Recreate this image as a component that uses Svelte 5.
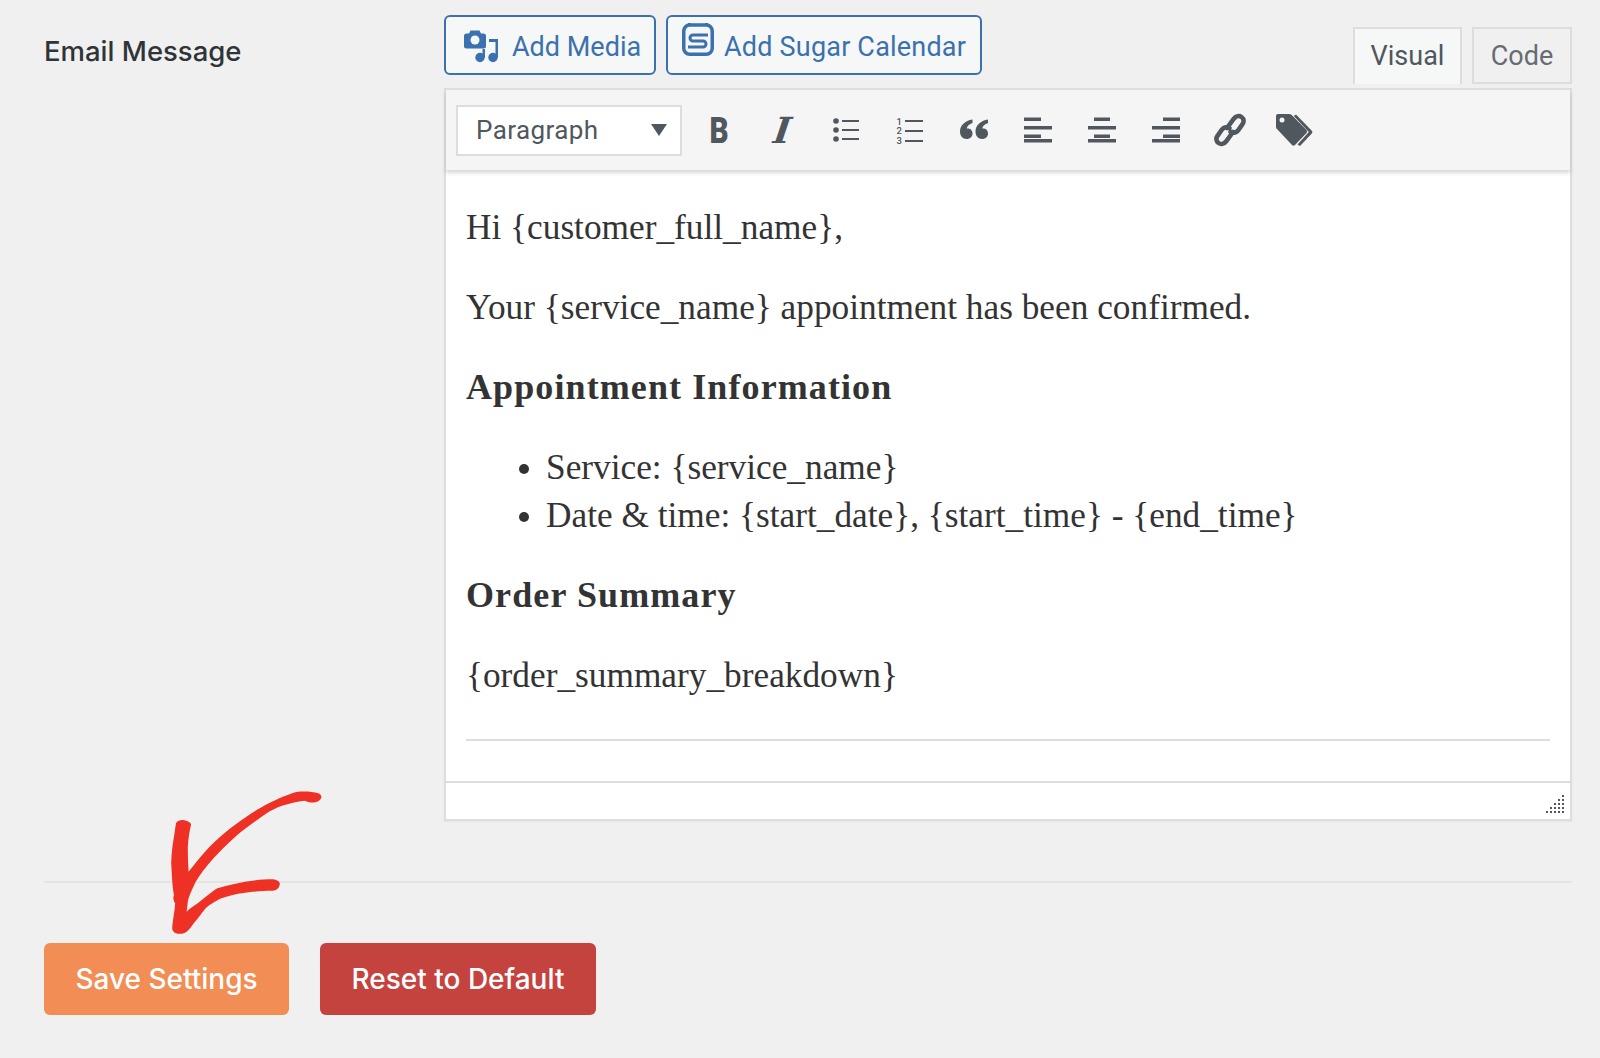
<script>
    // resize grip dots, one row per step of the triangle
    const grip = [];
    for (let row = 0; row < 5; row++) {
        for (let col = 4 - row; col < 5; col++) {
            grip.push({ x: col * 4, y: row * 4 });
        }
    }
</script>

<div class="page">
    <div class="field">
        <div class="label">Email Message</div>
        <div class="editor-wrap">
            <div class="media-row">
                <button class="media-btn first">
                    <svg class="ic-media" viewBox="0 0 34 33" aria-hidden="true">
                        <path d="M2.500 3.500H5L6.500.500h9l1.500 3h2.500a2.500 2.500 0 0 1 2.500 2.500v10a2.500 2.500 0 0 1-2.500 2.500h-17A2.500 2.500 0 0 1 0 16V6a2.500 2.500 0 0 1 2.500-2.500z" fill="#3a71ae" />
                        <circle cx="11" cy="10" r="4.500" fill="#f6f7f7" />
                        <circle cx="16" cy="27.500" r="4.700" fill="#3a71ae" />
                        <path d="M18.500 19h2.500v8.500h-2.500z" fill="#3a71ae" />
                        <circle cx="29" cy="27.500" r="4.700" fill="#3a71ae" />
                        <path d="M25 9h9v18.500h-2.500V12H25z" fill="#3a71ae" />
                    </svg>
                    <span>Add Media</span>
                </button>
                <button class="media-btn second">
                    <svg class="ic-cal" viewBox="0 0 32 33" aria-hidden="true">
                        <rect x="1.750" y="2" width="28.500" height="29.250" rx="6" fill="none" stroke="#3a71ae" stroke-width="3.500" />
                        <path d="M6 0h3v3H6zM23 0h3v3h-3z" fill="#3a71ae" />
                        <path d="M26 12H11a3 3 0 0 0 0 6h10a3 3 0 0 1 0 6H6" fill="none" stroke="#3a71ae" stroke-width="3" />
                    </svg>
                    <span>Add Sugar Calendar</span>
                </button>
                <div class="tabs">
                    <div class="tab active">Visual</div>
                    <div class="tab">Code</div>
                </div>
            </div>

            <div class="editor">
                <div class="toolbar">
                    <div class="format-select">
                        <span>Paragraph</span>
                        <i class="caret"></i>
                    </div>
                    <div class="tool"><span class="bold-glyph">B</span></div>
                    <div class="tool"><span class="italic-glyph">I</span></div>
                    <div class="tool">
                        <svg viewBox="0 0 30 30" class="ic" aria-hidden="true">
                            <circle cx="5" cy="6" r="2.800" /><circle cx="5" cy="15" r="2.800" /><circle cx="5" cy="24" r="2.800" />
                            <path d="M11 5h17v2H11zM11 14h17v2H11zM11 23h17v2H11z" />
                        </svg>
                    </div>
                    <div class="tool">
                        <svg viewBox="0 0 30 30" class="ic" aria-hidden="true">
                            <text x="1.500" y="9.500" class="num">1</text>
                            <text x="1.500" y="19" class="num">2</text>
                            <text x="1.500" y="28.500" class="num">3</text>
                            <path d="M10 5h18v2H10zM10 15h18v2H10zM10 25h18v2H10z" />
                        </svg>
                    </div>
                    <div class="tool">
                        <svg viewBox="0 0 30 30" class="ic" aria-hidden="true">
                            <path d="M13.500 4.500v3.500C9.500 9.500 8 11.500 7.800 13.500c3.500-.5 5.700 1.800 5.700 5 0 3.300-2.600 5.500-5.800 5.500C3.500 24 1 20.800 1 16.500 1 10.500 6 5.500 13.500 4.500zM29 4.500v3.500c-4 1.500-5.500 3.500-5.700 5.500 3.500-.5 5.700 1.800 5.700 5 0 3.300-2.600 5.500-5.800 5.500-4.200 0-6.700-3.200-6.700-7.500 0-6 5-11 12.500-12z" />
                        </svg>
                    </div>
                    <div class="tool">
                        <svg viewBox="0 0 30 30" class="ic" aria-hidden="true">
                            <path d="M1 2.500h17V6H1zM1 11h28v3.500H1zM1 19.500h17V23H1zM1 27.500h28V24H1z" />
                        </svg>
                    </div>
                    <div class="tool">
                        <svg viewBox="0 0 30 30" class="ic" aria-hidden="true">
                            <path d="M7 2.500h16V6H7zM1 11h28v3.500H1zM7 19.500h16V23H7zM1 27.500h28V24H1z" />
                        </svg>
                    </div>
                    <div class="tool">
                        <svg viewBox="0 0 30 30" class="ic" aria-hidden="true">
                            <path d="M12 2.500h17V6H12zM1 11h28v3.500H1zM12 19.500h17V23H12zM1 27.500h28V24H1z" />
                        </svg>
                    </div>
                    <div class="tool">
                        <svg viewBox="0 0 34 36" class="ic big" aria-hidden="true">
                            <g fill="none" stroke="#50575e" stroke-width="4.600" stroke-linecap="round">
                                <path d="M14 16l7-9.500c2-2.500 5-3.300 7.500-1.500s2.800 5 .8 7.500L25 18.500c-2 2.500-5 3-7.500 1.300" />
                                <path d="M20 20l-7 9.500c-2 2.500-5 3.300-7.500 1.500s-2.800-5-.8-7.500L9 17.500c2-2.500 5-3 7.500-1.300" />
                            </g>
                        </svg>
                    </div>
                    <div class="tool">
                        <svg viewBox="0 0 38 34" class="ic tag" aria-hidden="true">
                            <path d="M3 1h11.500l2 .8L31.500 17a2.200 2.200 0 0 1 0 3L20 32a2.200 2.200 0 0 1-3 0L1.500 15.500 1 14V3a2 2 0 0 1 2-2z" />
                            <path d="M21 1.500l15.800 16.300c.8.900.8 2 0 2.800L25 33l-2.500-1.500 11.300-12.500-15-16z" />
                            <circle cx="7" cy="7" r="2.500" fill="#f5f5f5" />
                        </svg>
                    </div>
                </div>

                <div class="content">
                    <p>Hi &#123;customer_full_name&#125;,</p>
                    <p>Your &#123;service_name&#125; appointment has been confirmed.</p>
                    <h3>Appointment Information</h3>
                    <ul>
                        <li>Service: &#123;service_name&#125;</li>
                        <li>Date &amp; time: &#123;start_date&#125;, &#123;start_time&#125; - &#123;end_time&#125;</li>
                    </ul>
                    <h3>Order Summary</h3>
                    <p>&#123;order_summary_breakdown&#125;</p>
                    <hr />
                </div>

                <div class="statusbar">
                    <svg class="grip" viewBox="0 0 18 18" aria-hidden="true">
                        {#each grip as d}
                            <rect x={d.x} y={d.y} width="2" height="2" />
                        {/each}
                    </svg>
                </div>
            </div>
        </div>
    </div>

    <div class="actions">
        <button class="action save">Save Settings</button>
        <button class="action reset">Reset to Default</button>
    </div>

    <!-- hand drawn annotation over the page -->
    <svg class="arrow" viewBox="0 0 1568 864" preserveAspectRatio="none" aria-hidden="true">
        <path d="M812 85C808 98 790 102 770 92C745 95 710 105 680 125C650 150 625 170 600 195C575 222 555 245 540 265C520 292 505 315 495 335C485 360 477 380 475 395L472 425C480 415 490 408 500 400C520 382 535 365 550 355C575 345 600 340 620 335C645 330 670 328 690 328C705 330 710 340 707 345C705 358 695 362 690 362C665 362 640 365 620 368C595 372 575 378 560 385C540 396 530 405 520 415C510 430 500 447 490 460C480 478 472 488 465 490C452 494 440 490 438 483C434 475 436 470 436 465C438 445 442 420 443 400C437 390 438 380 440 375C436 350 435 320 433 280C434 245 437 220 440 200L445 160C448 152 455 150 462 150C475 152 484 158 483 165C478 190 476 210 475 230C475 260 476 285 477 305C495 278 510 255 530 230C553 205 575 180 600 160C625 137 655 115 680 100C705 85 730 72 750 66C770 63 790 65 805 70C812 73 814 80 812 85Z" fill="#ee3124" />
    </svg>
</div>

<style>
    :global(body) {
        background: #f0f0f0;
    }

    .page {
        position: relative;
        height: 1058px;
        box-sizing: border-box;
        padding: 15px 28px 0 44px;
        font-family: Roboto, "Liberation Sans", sans-serif;
        color: #333;
        overflow: hidden;
    }

    .field {
        display: grid;
        grid-template-columns: 400px 1fr;
    }

    .label {
        font-family: Inter, sans-serif;
        font-weight: 500;
        font-size: 27.500px;
        padding-top: 19px;
        color: #2f3438;
    }

    .media-row {
        display: flex;
        height: 73px;
        gap: 10px;
    }

    .media-btn {
        display: flex;
        align-items: center;
        height: 60px;
        box-sizing: border-box;
        background: #f6f7f7;
        border: 2px solid #3a71ae;
        border-radius: 6px;
        color: #3a71ae;
        font-family: Roboto, sans-serif;
        font-size: 27px;
        letter-spacing: 0.2px;
        padding: 0;
    }

    .media-btn span {
        padding-top: 3px;
    }

    .first {
        width: 212px;
        padding-left: 18px;
        gap: 14px;
        letter-spacing: 0;
    }

    .second {
        width: 316px;
        padding-left: 14px;
        gap: 10px;
    }

    .ic-media {
        width: 34px;
        height: 33px;
        margin-top: 3px;
    }

    .ic-cal {
        width: 32px;
        height: 33px;
        margin-top: -11px;
    }

    .tabs {
        margin-left: auto;
        display: flex;
        gap: 10px;
        padding-top: 12px;
        height: 57px;
    }

    .tab {
        width: 100px;
        box-sizing: border-box;
        height: 57px;
        border: 2px solid #ddd;
        display: flex;
        align-items: center;
        justify-content: center;
        font-size: 27px;
        color: #666c72;
        background: #f0f0f0;
    }

    .tab.active {
        width: 109px;
        background: #f6f7f7;
        color: #50575e;
        border-bottom: none;
        padding-bottom: 1px;
    }

    .editor {
        border: 2px solid #ddd;
        box-shadow: 0 1px 2px rgba(0, 0, 0, 0.05);
        background: #fff;
    }

    .toolbar {
        display: flex;
        align-items: center;
        height: 80px;
        box-sizing: border-box;
        padding-left: 10px;
        background: #f5f5f5;
        box-shadow: 0 3px 4px rgba(0, 0, 0, 0.16);
        position: relative;
    }

    .format-select {
        width: 226px;
        height: 51px;
        box-sizing: border-box;
        border: 2px solid #ddd;
        background: #fff;
        display: flex;
        align-items: center;
        justify-content: space-between;
        padding: 0 13px 0 18px;
        font-size: 26px;
        letter-spacing: 0.4px;
        color: #50575e;
        margin-right: 4px;
    }

    .caret {
        width: 0;
        height: 0;
        border-left: 8px solid transparent;
        border-right: 8px solid transparent;
        border-top: 12px solid #50575e;
    }

    .tool {
        width: 64px;
        height: 50px;
        display: flex;
        align-items: center;
        justify-content: center;
        color: #50575e;
    }

    .bold-glyph {
        font-family: Roboto, sans-serif;
        font-weight: 900;
        font-size: 37px;
        line-height: 1;
        transform: translateX(1px) scaleX(0.8);
    }

    .italic-glyph {
        font-family: "DejaVu Serif", serif;
        font-style: italic;
        font-weight: 700;
        font-size: 36px;
        line-height: 1;
        transform: skewX(-8deg);
    }

    .ic {
        width: 30px;
        height: 30px;
        fill: #50575e;
    }

    .ic.big {
        width: 34px;
        height: 36px;
    }

    .ic.tag {
        width: 38px;
        height: 34px;
    }

    .num {
        font-family: Roboto, sans-serif;
        font-size: 9.500px;
        font-weight: 500;
    }

    .content {
        padding: 34px 20px 0 20px;
        height: 611px;
        box-sizing: border-box;
        font-family: "Liberation Serif", serif;
        font-size: 35.300px;
        line-height: 48px;
        color: #333;
    }

    .content p,
    .content h3 {
        margin: 0 0 32px;
        font-size: 35.300px;
        line-height: 48px;
    }

    .content h3 {
        font-weight: 700;
        font-size: 36px;
        letter-spacing: 1.100px;
        margin: -1px 0 33px;
    }

    .content ul {
        margin: 0 0 32px;
        padding-left: 80px;
    }

    .content hr {
        border: none;
        height: 2px;
        background: #ddd;
        margin: 39px 0 0;
    }

    .statusbar {
        height: 36px;
        border-top: 2px solid #ddd;
        position: relative;
    }

    .grip {
        position: absolute;
        right: 6px;
        bottom: 6px;
        width: 18px;
        height: 18px;
        fill: #50575e;
    }

    .actions {
        display: flex;
        gap: 31px;
        margin-top: 60px;
        padding-top: 60px;
        border-top: 2px solid #e4e4e4;
    }

    .action {
        height: 72px;
        border: none;
        border-radius: 6px;
        color: #fff;
        font-family: Inter, sans-serif;
        font-weight: 500;
        font-size: 28px;
        padding: 0;
    }

    .save {
        width: 245px;
        background: #f28d55;
    }

    .reset {
        width: 276px;
        background: #c5433f;
    }

    .arrow {
        position: absolute;
        left: 0;
        top: 770px;
        width: 620px;
        height: 288px;
        pointer-events: none;
    }
</style>
